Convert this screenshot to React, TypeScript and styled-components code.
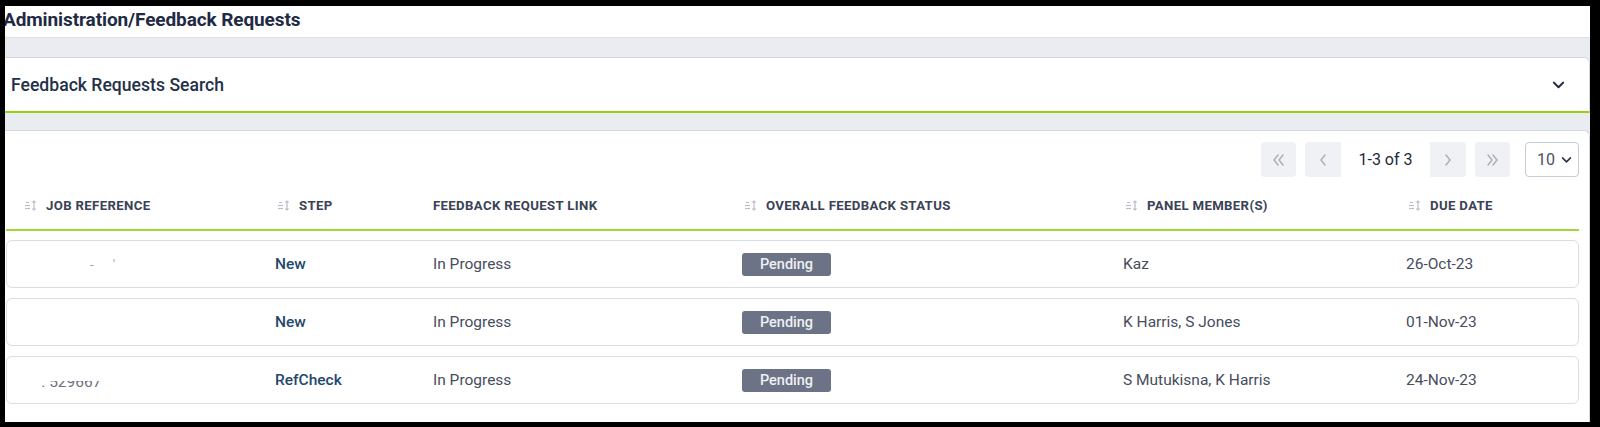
import React from "react";
import styled, { createGlobalStyle } from "styled-components";

const GlobalStyle = createGlobalStyle`
  html, body { margin: 0; padding: 0; background: #000; }
  body { font-family: Roboto, "Noto Sans", Arial, sans-serif; }
  * { box-sizing: border-box; }
`;

const Frame = styled.div`
  width: 1600px;
  height: 427px;
  border-style: solid;
  border-color: #000;
  border-width: 6px 10px 5px 5px;
  background: #fff;
  overflow: hidden;
  display: flex;
  flex-direction: column;
`;

const TitleBar = styled.div`
  height: 31px;
  flex: none;
  display: flex;
  align-items: center;
  padding-bottom: 5px;
  background: #fff;
`;

const Title = styled.h1`
  margin: 0 0 0 -2px;
  font-size: 19px;
  font-weight: 700;
  color: #1f2a44;
  letter-spacing: -0.1px;
`;

const Content = styled.div`
  flex: 1;
  margin-left: -10px;
  background: #e9ecf1;
  border-top: 1px solid #dde1e8;
  padding-top: 19px;
  display: flex;
  flex-direction: column;
  gap: 17px;
`;

const SearchCard = styled.div`
  height: 56px;
  background: #fff;
  border: 1px solid #d3d8e1;
  border-bottom: 2px solid #95d20f;
  border-radius: 0 6px 0 0;
  display: flex;
  align-items: center;
  justify-content: space-between;
  padding: 0 24px 0 15px;
`;

const SearchTitle = styled.span`
  font-size: 17.6px;
  font-weight: 500;
  color: #243049;
`;

const TableCard = styled.div`
  flex: 1;
  background: #fff;
  border: 1px solid #d3d8e1;
  border-bottom: none;
  border-radius: 0 6px 0 0;
  padding: 11px 10px 0 10px;
`;

const Pager = styled.div`
  display: flex;
  justify-content: flex-end;
  align-items: center;
  height: 35px;
`;

const PageButton = styled.button<{ $square?: "left" | "right" }>`
  width: ${(p) => (p.$square ? 36 : 35)}px;
  height: 35px;
  border: none;
  padding: 0;
  background: #eff1f5;
  color: #a9b0bc;
  display: flex;
  align-items: center;
  justify-content: center;
  border-radius: ${(p) =>
    p.$square === "right" ? "4px 0 0 4px" : p.$square === "left" ? "0 4px 4px 0" : "4px"};
`;

const Gap = styled.span<{ $w: number }>`
  width: ${(p) => p.$w}px;
`;

const Count = styled.span`
  width: 89px;
  text-align: center;
  font-size: 16px;
  color: #1e2a3b;
`;

const Select = styled.div`
  flex: none;
  width: 54px;
  height: 35px;
  border: 1px solid #c5ccd6;
  border-radius: 4px;
  display: flex;
  align-items: center;
  padding: 0 6px 0 11px;
  font-size: 16px;
  color: #4a5162;
  & > svg {
    margin-left: auto;
  }
`;

const cols = "253px 158px 309px 381px 283px 187px";

const HeaderRow = styled.div`
  display: grid;
  grid-template-columns: ${cols};
  height: 54px;
  padding: 4px 1px 0;
  align-items: center;
  border-bottom: 2px solid #a3d733;
`;

const HeaderCell = styled.div<{ $sortable?: boolean }>`
  display: flex;
  align-items: center;
  gap: 9px;
  padding-left: ${(p) => (p.$sortable ? 18 : 15)}px;
  font-size: 13.2px;
  font-weight: 700;
  letter-spacing: 0.35px;
  text-transform: uppercase;
  color: #3a4255;
  white-space: nowrap;
`;

const Rows = styled.div`
  display: flex;
  flex-direction: column;
  gap: 10px;
  padding-top: 9px;
`;

const Row = styled.div`
  display: grid;
  grid-template-columns: ${cols};
  height: 48px;
  align-items: center;
  border: 1px solid #d8dde6;
  border-radius: 6px;
  background: #fff;
`;

const Cell = styled.div<{ $link?: boolean }>`
  padding-left: 15px;
  font-size: 15.5px;
  font-weight: ${(p) => (p.$link ? 500 : 400)};
  color: ${(p) => (p.$link ? "#24476b" : "#474d5d")};
  white-space: nowrap;
`;

const Badge = styled.span`
  display: inline-flex;
  align-items: center;
  justify-content: center;
  width: 89px;
  height: 23px;
  border-radius: 3px;
  background: #6c7386;
  color: #eef0f3;
  font-size: 14.5px;
  font-weight: 500;
`;

const Redacted = styled.span`
  display: inline-block;
  height: 9px;
  overflow: hidden;
  vertical-align: middle;
  color: #6b7080;
  line-height: 18px;
  margin-top: 10px;
  & > span {
    display: block;
    margin-top: -8px;
  }
`;

const Faint = styled.span`
  color: #9aa0ab;
  font-size: 13px;
  margin-left: 68px;
  letter-spacing: 8px;
`;

const SortIcon = () => (
  <svg width="12" height="11" viewBox="0 0 12 11" fill="none" stroke="#b7bdc8" strokeWidth="1.2">
    <line x1="1" y1="2.5" x2="4" y2="2.5" />
    <line x1="0" y1="5.5" x2="5" y2="5.5" />
    <line x1="0" y1="8.5" x2="5" y2="8.5" />
    <line x1="9" y1="1" x2="9" y2="10" />
    <polyline points="7.5,2.5 9,1 10.5,2.5" />
    <polyline points="7.5,8.5 9,10 10.5,8.5" />
  </svg>
);

const Chevron = ({ dir, double, color = "#a9b0bc", size = 14, sw = 1.5 }: { dir: "l" | "r" | "d"; double?: boolean; color?: string; size?: number; sw?: number }) => {
  if (dir === "d") {
    return (
      <svg width={size} height={size} viewBox="0 0 14 14" fill="none" stroke={color} strokeWidth={sw} strokeLinecap="round" strokeLinejoin="round">
        <polyline points="2,5 7,10 12,5" />
      </svg>
    );
  }
  const pts = (x: number) => (dir === "l" ? `${x + 4},2 ${x},7 ${x + 4},12` : `${x},2 ${x + 4},7 ${x},12`);
  return (
    <svg width={size} height={size} viewBox="0 0 14 14" fill="none" stroke={color} strokeWidth={sw} strokeLinecap="round" strokeLinejoin="round">
      {double ? (
        <>
          <polyline points={pts(2)} />
          <polyline points={pts(7)} />
        </>
      ) : (
        <polyline points={pts(5)} />
      )}
    </svg>
  );
};

type Item = { job: React.ReactNode; step: string; link: string; status: string; panel: string; due: string };

const rows: Item[] = [
  { job: <Faint>- '</Faint>, step: "New", link: "In Progress", status: "Pending", panel: "Kaz", due: "26-Oct-23" },
  { job: "", step: "New", link: "In Progress", status: "Pending", panel: "K Harris, S Jones", due: "01-Nov-23" },
  {
    job: (
      <Redacted>
        <span>&nbsp;&nbsp;&nbsp;&nbsp;&nbsp;.&nbsp;529667</span>
      </Redacted>
    ),
    step: "RefCheck",
    link: "In Progress",
    status: "Pending",
    panel: "S Mutukisna, K Harris",
    due: "24-Nov-23",
  },
];

const headers: { label: string; sortable: boolean }[] = [
  { label: "Job Reference", sortable: true },
  { label: "Step", sortable: true },
  { label: "Feedback Request Link", sortable: false },
  { label: "Overall Feedback Status", sortable: true },
  { label: "Panel Member(s)", sortable: true },
  { label: "Due Date", sortable: true },
];

export default function App() {
  return (
    <>
      <GlobalStyle />
      <Frame>
        <TitleBar>
          <Title>Administration/Feedback Requests</Title>
        </TitleBar>
        <Content>
          <SearchCard>
            <SearchTitle>Feedback Requests Search</SearchTitle>
            <Chevron dir="d" color="#1f2a44" size={13} sw={2.2} />
          </SearchCard>
          <TableCard>
            <Pager>
              <PageButton>
                <Chevron dir="l" double />
              </PageButton>
              <Gap $w={9} />
              <PageButton $square="right">
                <Chevron dir="l" />
              </PageButton>
              <Count>1-3 of 3</Count>
              <PageButton $square="left">
                <Chevron dir="r" />
              </PageButton>
              <Gap $w={9} />
              <PageButton>
                <Chevron dir="r" double />
              </PageButton>
              <Gap $w={15} />
              <Select>
                <span>10</span>
                <Chevron dir="d" color="#2b3245" size={11} sw={2} />
              </Select>
            </Pager>
            <HeaderRow>
              {headers.map((h) => (
                <HeaderCell key={h.label} $sortable={h.sortable}>
                  {h.sortable && <SortIcon />}
                  <span>{h.label}</span>
                </HeaderCell>
              ))}
            </HeaderRow>
            <Rows>
              {rows.map((r, i) => (
                <Row key={i}>
                  <Cell>{r.job}</Cell>
                  <Cell $link>{r.step}</Cell>
                  <Cell>{r.link}</Cell>
                  <Cell>
                    <Badge>{r.status}</Badge>
                  </Cell>
                  <Cell>{r.panel}</Cell>
                  <Cell>{r.due}</Cell>
                </Row>
              ))}
            </Rows>
          </TableCard>
        </Content>
      </Frame>
    </>
  );
}
